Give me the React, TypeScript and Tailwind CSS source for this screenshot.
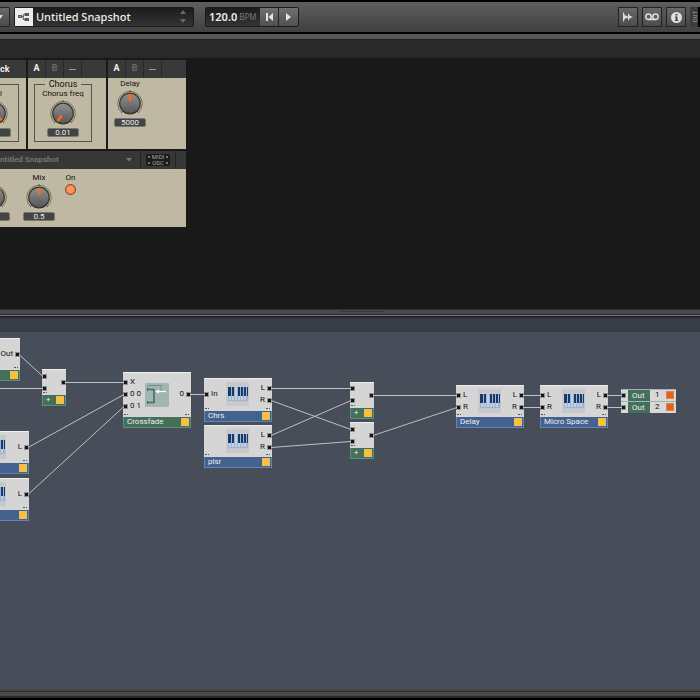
import type { ReactNode } from "react";

type Tone = "green" | "blue";

type NodeData = {
  id: string;
  name?: string;
  x: number;
  y: number;
  width: number;
  body: number;
  tone: Tone;
  icon?: "keys" | "crossfade";
  inputs: string[];
  outputs: string[];
  inTop: number;
  outTop: number;
};

const PORT_ROW = 12;

const nodes: NodeData[] = [
  { id: "src", x: -48, y: 6, width: 68, body: 32, tone: "green", inputs: [], outputs: ["Out"], inTop: 0, outTop: 10 },
  { id: "add1", name: "+", x: 42, y: 37, width: 24, body: 26, tone: "green", inputs: ["", ""], outputs: [""], inTop: 1, outTop: 7 },
  { id: "syn1", x: -39, y: 99, width: 68, body: 32, tone: "blue", icon: "keys", inputs: [], outputs: ["L"], inTop: 0, outTop: 10 },
  { id: "syn2", x: -39, y: 146, width: 68, body: 32, tone: "blue", icon: "keys", inputs: [], outputs: ["L"], inTop: 0, outTop: 10 },
  { id: "xfade", name: "Crossfade", x: 123, y: 40, width: 68, body: 45, tone: "green", icon: "crossfade", inputs: ["X", "0 0", "0 1"], outputs: ["0"], inTop: 4, outTop: 16 },
  { id: "chrs", name: "Chrs", x: 204, y: 46, width: 68, body: 33, tone: "blue", icon: "keys", inputs: ["In"], outputs: ["L", "R"], inTop: 10, outTop: 4 },
  { id: "plsr", name: "plsr", x: 204, y: 93, width: 68, body: 32, tone: "blue", icon: "keys", inputs: [], outputs: ["L", "R"], inTop: 0, outTop: 4 },
  { id: "add2", name: "+", x: 350, y: 50, width: 24, body: 26, tone: "green", inputs: ["", ""], outputs: [""], inTop: 0, outTop: 7 },
  { id: "add3", name: "+", x: 350, y: 90, width: 24, body: 26, tone: "green", inputs: ["", ""], outputs: [""], inTop: 1, outTop: 7 },
  { id: "delay", name: "Delay", x: 456, y: 53, width: 68, body: 32, tone: "blue", icon: "keys", inputs: ["L", "R"], outputs: ["L", "R"], inTop: 4, outTop: 4 },
  { id: "space", name: "Micro Space", x: 540, y: 53, width: 68, body: 32, tone: "blue", icon: "keys", inputs: ["L", "R"], outputs: ["L", "R"], inTop: 4, outTop: 4 },
];

// [from node, output index, to node, input index]
const wires: [string, number, string, number][] = [
  ["src", 0, "add1", 0],
  ["add1", 0, "xfade", 0],
  ["syn1", 0, "xfade", 1],
  ["syn2", 0, "xfade", 2],
  ["xfade", 0, "chrs", 0],
  ["chrs", 0, "add2", 0],
  ["chrs", 1, "add3", 0],
  ["plsr", 0, "add2", 1],
  ["plsr", 1, "add3", 1],
  ["add2", 0, "delay", 0],
  ["add3", 0, "delay", 1],
  ["delay", 0, "space", 0],
  ["delay", 1, "space", 1],
];

function findNode(id: string) {
  return nodes.find((n) => n.id === id)!;
}

function KeysIcon() {
  return (
    <svg width="23" height="24" viewBox="0 0 23 24" shapeRendering="crispEdges">
      <rect width="23" height="24" fill="#c6c8cb" />
      <rect x="2" y="5" width="20" height="14" fill="#9fb3ce" />
      <path d="M3 14h2v4H3zM6 14h2v4H6zM9 5h2v13H9zM12 14h2v4h-2zM15 14h2v4h-2zM18 14h2v4h-2z" fill="#c3d0e0" />
      <path d="M2 5h3v9H2zM6 5h2v9H6zM12 5h2v9h-2zM15 5h2v9h-2zM18 5h2v9h-2zM21 5h1v9h-1z" fill="#163a6c" />
    </svg>
  );
}

function CrossfadeIcon() {
  return (
    <svg width="24" height="24" viewBox="0 0 24 24" fill="none">
      <rect width="24" height="24" rx="1" fill="#a2b5b2" />
      <path d="M3 4.500V2.500h13v5" stroke="#6d9287" />
      <path d="M3 6.500h6v13H3" stroke="#3c7464" strokeWidth="1.600" />
      <path d="M2.500 5v3M2.500 18v3" stroke="#3c7464" />
      <path d="M21 8.500H13" stroke="#fff" strokeWidth="1.200" />
      <path d="M10 8.500l4-2v4z" fill="#fff" />
    </svg>
  );
}

function Port() {
  return <span className="size-[5px] shrink-0 border border-[#929292] bg-[#151515]" />;
}

function Block({ node }: { node: NodeData }) {
  const small = node.width < 30;
  return (
    <article
      className="absolute flex flex-col text-[8px] leading-3 text-[#111]"
      style={{ left: node.x, top: node.y, width: node.width }}
    >
      <div
        className="relative flex justify-between bg-[#d5d5d5] inset-shadow-[0_1px_0_#eee]"
        style={{ height: node.body }}
      >
        <ul style={{ paddingTop: node.inTop }}>
          {node.inputs.map((label, i) => (
            <li key={i} className="flex h-3 items-center gap-[2px]">
              <Port />
              {label}
            </li>
          ))}
        </ul>
        <ul className="flex flex-col items-end" style={{ paddingTop: node.outTop }}>
          {node.outputs.map((label, i) => (
            <li key={i} className="flex h-3 items-center gap-[2px]">
              {label}
              <Port />
            </li>
          ))}
        </ul>
        {node.icon && (
          <span
            className={
              node.icon === "keys"
                ? "absolute top-1 left-[22px]"
                : "absolute top-[11px] left-[22px]"
            }
          >
            {node.icon === "keys" ? <KeysIcon /> : <CrossfadeIcon />}
          </span>
        )}
        <span className="absolute bottom-[2px] left-px w-1 border-b border-dotted border-[#555]" />
        {!small && (
          <span className="absolute right-[2px] bottom-[2px] w-1 border-b border-dotted border-[#555]" />
        )}
      </div>
      <footer
        className={
          node.tone === "green"
            ? "flex h-[11px] items-center justify-between border border-t-0 border-[#5f907c] bg-[#44705a] pr-[2px] pl-[3px] text-[#eee]"
            : "flex h-[11px] items-center justify-between border border-t-0 border-[#6484b4] bg-[#44628f] pr-[2px] pl-[3px] text-[#eee]"
        }
      >
        <span className="whitespace-nowrap">{node.name}</span>
        <span className="size-[6px] bg-[#fcbf35] outline outline-[#e6c15f]" />
      </footer>
    </article>
  );
}

function OutRow({ channel }: { channel: number }) {
  return (
    <div className="flex h-3 items-center bg-[#d8d8d8] text-[8px] leading-3 text-[#111] inset-shadow-[0_1px_0_#9db3bd]">
      <span className="flex w-[7px] items-center">
        <Port />
      </span>
      <span className="h-[11px] w-[22px] self-end bg-[#44705a] pl-1 leading-[11px] text-[#eee]">Out</span>
      <span className="flex-1 pl-[5px]">{channel}</span>
      <span className="mr-[3px] size-[6px] bg-[#e0641c] outline outline-[#dd8350]" />
    </div>
  );
}

function Canvas() {
  return (
    <section className="relative min-h-[357px] flex-1 overflow-hidden bg-[#474e5a]">
      {nodes.map((node) => (
        <Block key={node.id} node={node} />
      ))}
      <div className="absolute top-[57px] left-[621px] flex w-[55px] flex-col">
        <OutRow channel={1} />
        <OutRow channel={2} />
      </div>
      <svg className="pointer-events-none absolute inset-0 size-full" stroke="#bcc2c5">
        {wires.map(([from, out, to, input]) => {
          const a = findNode(from);
          const b = findNode(to);
          return (
            <line
              key={`${from}${out}${to}${input}`}
              x1={a.x + a.width - 1}
              y1={a.y + a.outTop + PORT_ROW * out + 6.5}
              x2={b.x + 1}
              y2={b.y + b.inTop + PORT_ROW * input + 6.5}
            />
          );
        })}
        <line x1="0" y1="56.5" x2="43" y2="56.5" />
        <line x1="607" y1="63.5" x2="622" y2="63.5" />
        <line x1="607" y1="75.5" x2="622" y2="75.5" />
      </svg>
    </section>
  );
}

function Knob({ label, value, angle }: { label: string; value: string; angle: number }) {
  return (
    <label className="flex w-[42px] flex-col items-center text-[8px] leading-[10px] text-[#111]">
      <span className="h-[10px] whitespace-nowrap">{label}</span>
      <span className="relative">
        <svg width="28" height="27" viewBox="0 0 28 27" fill="none">
          <defs>
            <linearGradient id="dial" x1="0" y1="0" x2="0" y2="1">
              <stop stopColor="#929292" />
              <stop offset="1" stopColor="#555" />
            </linearGradient>
          </defs>
          <path d="M5.500 23.500A12.300 12.300 0 1 1 22.500 23.500" stroke="#76705f" />
          <path d="M14 1v2M5 24l2-2M23 24l-2-2" stroke="#555" />
          <circle cx="14" cy="14.500" r="10.300" fill="url(#dial)" stroke="#35342f" strokeWidth="1.200" />
          <path
            d="M14 5v7"
            stroke="#ff6a13"
            strokeWidth="2.600"
            transform={`rotate(${angle} 14 14.5)`}
          />
        </svg>
        <input
          type="range"
          aria-label={label || "Level"}
          className="absolute inset-0 size-full opacity-0"
        />
      </span>
      <output className="mt-[2px] h-[9px] w-8 rounded-xs border border-[#777] bg-[#444] text-center leading-[7px] text-[#eee]">
        {value}
      </output>
    </label>
  );
}

function PanelTabs() {
  return (
    <div className="flex h-[18px] bg-[#393939] text-[9px] font-bold">
      <button className="w-[18px] border-r border-[#292929] text-[#f2f2f2]">A</button>
      <button className="w-[18px] border-r border-[#292929] text-[#6b6b6b]">B</button>
      <button aria-label="Minimize" className="flex w-[18px] items-center justify-center border-r border-[#292929]">
        <span className="h-px w-[7px] bg-[#999]" />
      </button>
    </div>
  );
}

function MidiOscLine({ text }: { text: string }) {
  return (
    <span className="flex items-center justify-between">
      <span className="size-[2px] bg-[#777]" />
      {text}
      <span className="size-[2px] bg-[#777]" />
    </span>
  );
}

function Rack() {
  return (
    <section className="h-[249px] bg-[#191919]">
      <div className="flex w-[186px] flex-col gap-[2px]">
        <div className="flex gap-[2px]">
          <div className="flex w-[26px] flex-col overflow-hidden bg-[#bfb9a3]">
            <div className="h-[18px] bg-[#393939] text-[9px] leading-[18px] font-bold text-[#eee]">ck</div>
            <div className="mt-[6px] mr-[7px] flex h-[58px] justify-end border border-l-0 border-[#55524a]">
              <div className="relative mt-1 mr-[2px]">
                <Knob label="" value="" angle={135} />
                <span className="absolute top-0 right-[14px] text-[8px] leading-[10px] text-[#111]">l</span>
              </div>
            </div>
          </div>
          <div className="h-[89px] w-[78px] bg-[#bfb9a3]">
            <PanelTabs />
            <fieldset className="mt-px mr-[14px] ml-[6px] flex h-[63px] justify-center border border-[#55524a]">
              <legend className="mx-auto px-1 text-[9px] leading-[10px] text-[#111]">Chorus</legend>
              <div className="flex justify-center">
                <Knob label="Chorus freq" value="0.01" angle={215} />
              </div>
            </fieldset>
          </div>
          <div className="h-[89px] w-[78px] bg-[#bfb9a3]">
            <PanelTabs />
            <div className="pt-px pl-px">
              <Knob label="Delay" value="5000" angle={0} />
            </div>
          </div>
        </div>
        <div className="bg-[#bfb9a3]">
          <div className="flex h-[18px] items-center bg-[#373737] text-[8px] font-semibold text-[#777]">
            <span className="flex-1 whitespace-nowrap">ntitled Snapshot</span>
            <svg width="6" height="4" className="mr-2">
              <path d="M0 0h6L3 3.500z" fill="#777" />
            </svg>
            <div className="flex h-full w-[36px] items-center justify-center border-x border-[#232323]">
              <span className="flex h-3 w-6 flex-col rounded-xs bg-[#1c1c1c] px-[2px] text-[6px] leading-[6px] font-normal text-[#aaa]">
                <MidiOscLine text="MIDI" />
                <MidiOscLine text="OSC" />
              </span>
            </div>
            <span className="w-[10px]" />
          </div>
          <div className="flex h-[58px] pt-1">
            <div className="flex w-[18px] justify-end overflow-hidden">
              <div className="mr-[3px]">
                <Knob label="" value="" angle={45} />
              </div>
            </div>
            <Knob label="Mix" value="0.5" angle={0} />
            <label className="ml-[5px] flex flex-col items-center gap-px text-[8px] leading-[10px] text-[#111]">
              On
              <input
                type="checkbox"
                defaultChecked
                className="size-[11px] appearance-none rounded-full border border-[#5c4a3a] bg-[#ff9862] outline-1 -outline-offset-2 outline-[#ff6a22]"
              />
            </label>
          </div>
        </div>
      </div>
    </section>
  );
}

function ToolButton({ label, children }: { label: string; children: ReactNode }) {
  return (
    <button
      aria-label={label}
      className="flex size-5 items-center justify-center border border-[#222] bg-linear-to-b from-[#686868] to-[#4c4c4c]"
    >
      {children}
    </button>
  );
}

function Toolbar() {
  return (
    <header className="flex h-[34px] items-center border-y-2 border-black bg-linear-to-b from-[#5e5e5e] to-[#414141]">
      <button aria-label="Menu" className="flex h-5 w-[10px] items-center rounded-r-xs border border-l-0 border-[#222] bg-linear-to-b from-[#686868] to-[#4c4c4c]">
        <svg width="4" height="4">
          <path d="M-2 0h5L0 4z" fill="#ddd" />
        </svg>
      </button>
      <div className="ml-1 flex h-5 w-[180px] items-center rounded-xs border border-[#1a1a1a] bg-linear-to-b from-[#1c1c1c] to-[#343434]">
        <span className="flex h-full w-[18px] items-center justify-center bg-[#ededed]">
          <svg width="12" height="10" viewBox="0 0 12 10" fill="#5a5a5a">
            <path d="M0 3h4v3H0zM6.500 1H11v3H6.500zM6.500 6H11v3H6.500z" />
            <path d="M4 4.500h1.300M6.500 2.500H5.300v5h1.200" fill="none" stroke="#5a5a5a" />
            <path d="M1 4h2v1H1z" fill="#999" />
          </svg>
        </span>
        <span className="flex-1 pl-[3px] font-['Noto_Sans',sans-serif] text-[11px] leading-4 font-medium text-[#eee]">
          Untitled Snapshot
        </span>
        <svg width="6" height="14" className="mr-[7px]" fill="#686868">
          <path d="M0 4h6L3 0zM0 9h6L3 13z" />
        </svg>
      </div>
      <div className="ml-[11px] flex h-5 items-stretch rounded-xs border border-[#1a1a1a] bg-linear-to-b from-[#1c1c1c] to-[#343434]">
        <div className="flex w-[54px] items-center gap-[2px] pl-[3px] font-['Noto_Sans',sans-serif]">
          <span className="text-[11px] leading-4 font-semibold text-[#eee]">120.0</span>
          <span className="text-[8px] leading-4 text-[#777]">BPM</span>
        </div>
        <button aria-label="Restart" className="flex w-[19px] items-center justify-center border-r border-[#222] bg-linear-to-b from-[#707070] to-[#505050]">
          <svg width="7" height="8" fill="#e5e5e5">
            <path d="M0 0h2v8H0zM7 0v8L2.500 4z" />
          </svg>
        </button>
        <button aria-label="Play" className="flex w-[19px] items-center justify-center bg-linear-to-b from-[#707070] to-[#505050]">
          <svg width="5" height="8" fill="#e5e5e5">
            <path d="M0 0v8l5-4z" />
          </svg>
        </button>
      </div>
      <div className="ml-auto flex items-center gap-1">
        <ToolButton label="Player">
          <svg width="12" height="10" viewBox="0 0 12 10" fill="#ddd">
            <path d="M1 0l1 1 .5 2L6 4.500V1.500l1 .5.500 1.500L11 5 7.500 6.500 7 8l-1 .5V5.500L2.500 7 2 9l-1 1z" />
          </svg>
        </ToolButton>
        <ToolButton label="Recorder">
          <svg width="14" height="8" viewBox="0 0 14 8" fill="none" stroke="#ddd" strokeWidth="1.500">
            <circle cx="3.500" cy="3.800" r="2.700" />
            <circle cx="10.500" cy="3.800" r="2.700" />
            <path d="M3.500 6.500h7" />
          </svg>
        </ToolButton>
        <ToolButton label="Info">
          <svg width="11" height="11" viewBox="0 0 11 11">
            <circle cx="5.500" cy="5.500" r="5.500" fill="#e0e0e0" />
            <path d="M4.500 2h2v1.500h-2zM4 4.500h2.500v3.500h.8v1H3.800V8h.8V5.500H4z" fill="#444" />
          </svg>
        </ToolButton>
        <div className="flex h-5 w-[10px] items-center justify-center border-r-2 border-black bg-[#3b3b3b] text-[6px] leading-[7px] text-[#aaa] [writing-mode:vertical-rl]">
          <span className="rotate-180">OUT</span>
        </div>
      </div>
    </header>
  );
}

export default function App() {
  return (
    <main className="flex min-h-screen flex-col overflow-hidden bg-black font-['Roboto',sans-serif]">
      <Toolbar />
      <div className="h-[6px] border-b border-[#222] bg-[#575757]" />
      <div className="h-5 border-b-2 border-[#181818] bg-[#292929]" />
      <Rack />
      <div className="flex h-[8px] flex-col items-center border-t border-[#303030] bg-[#4b4b4b]">
        <span className="mt-px mr-[-22px] h-px w-[46px] bg-[#3a3a3a]" />
        <span className="mt-[2px] h-px w-full bg-[#252525]" />
        <span className="h-px w-full bg-[#808080]" />
        <span className="h-px w-full bg-[#1b1b1d]" />
      </div>
      <div className="h-[15px] border-t-2 border-[#2f343d] bg-[#363d45]" />
      <Canvas />
      <div className="h-[9px] border-t-2 border-[#444] bg-[#2b2b2b] pt-px">
        <div className="h-1 bg-[#4a4a4a]" />
      </div>
      <div className="h-[2px]" />
    </main>
  );
}
